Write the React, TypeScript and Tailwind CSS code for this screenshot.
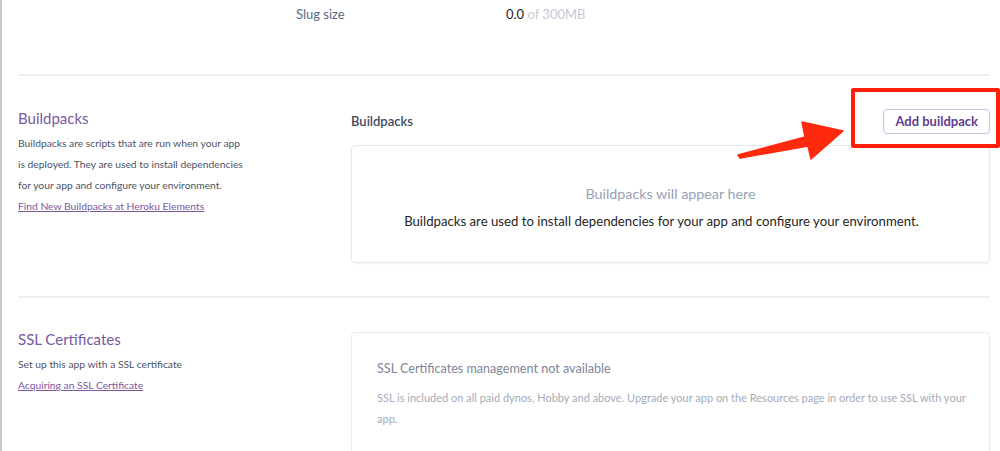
import React from 'react';

const purple = 'text-[#79589f]';

const App: React.FC = () => {
  return (
    <div className="relative w-[1000px] h-[451px] overflow-hidden bg-white border-l-2 border-[#c9c9c9] font-['Lato',sans-serif]">
      {/* slug size row */}
      <div className="h-[74px] pt-[6px]">
        <div className="flex items-center h-[18px] ml-[294px] text-[13px]">
          <span className="w-[210px] text-[#5a6a80]">Slug size</span>
          <span className="text-[#1f1f24]">0.0 <span className="text-[#c5cad6]">of 300MB</span></span>
        </div>
      </div>
      <div className="ml-[16px] w-[972px] h-[2px] bg-[#eef0f5]"></div>

      {/* buildpacks */}
      <div className="flex pl-[16px] pr-[10px] pt-[33px] pb-[33px]">
        <div className="w-[333px] shrink-0">
          <h2 className={`text-[15px] leading-[20px] -mt-[1px] ${purple}`}>Buildpacks</h2>
          <p className="mt-[5px] text-[10.3px] leading-[21px] text-[#4d5363]">
            Buildpacks are scripts that are run when your app<br />
            is deployed. They are used to install dependencies<br />
            for your app and configure your environment.
          </p>
          <a className="block text-[10.3px] leading-[21px] text-[#79589f] underline">Find New Buildpacks at Heroku Elements</a>
        </div>
        <div className="flex-1">
          <div className="flex items-center justify-between h-[25px]">
            <span className="text-[13px] font-semibold text-[#3f4a5e]">Buildpacks</span>
            <button className="h-[25px] px-[11px] rounded-[4px] border border-[#cdbfe0] text-[13px] font-bold text-[#5f3c93] bg-white">Add buildpack</button>
          </div>
          <div className="mt-[11px] h-[118px] rounded-[4px] border border-[#e6e8ee] shadow-[0_1px_2px_rgba(0,0,0,0.06)] flex flex-col items-center pt-[38px]">
            <div className="text-[14.3px] leading-[20px] text-[#96a2b6]">Buildpacks will appear here</div>
            <div className="mt-[7px] pr-[18px] text-[13.2px] leading-[20px] text-[#1f1f24]">Buildpacks are used to install dependencies for your app and configure your environment.</div>
          </div>
        </div>
      </div>
      <div className="ml-[16px] w-[972px] h-[2px] bg-[#eef0f5]"></div>

      {/* ssl */}
      <div className="flex pl-[16px] pr-[10px] pt-[34px]">
        <div className="w-[333px] shrink-0">
          <h2 className={`text-[15px] leading-[20px] -mt-[3px] ${purple}`}>SSL Certificates</h2>
          <p className="mt-[5px] text-[10.3px] leading-[21px] text-[#4d5363]">Set up this app with a SSL certificate</p>
          <a className="block text-[10.3px] leading-[21px] text-[#79589f] underline">Acquiring an SSL Certificate</a>
        </div>
        <div className="flex-1 h-[160px] rounded-[4px] border border-[#e9ebf0] pl-[25px] pt-[26px]">
          <div className="text-[12.6px] leading-[20px] text-[#7d8698]">SSL Certificates management not available</div>
          <p className="mt-[8px] text-[11px] leading-[21px] text-[#a4abb9] pr-[20px]">
            SSL is included on all paid dynos, Hobby and above. Upgrade your app on the Resources page in order to use SSL with your app.
          </p>
        </div>
      </div>

      {/* annotation overlay */}
      <div className="absolute left-[849px] top-[88px] w-[149px] h-[60px] border-[4px] border-[#ff1f0a] rounded-[2px]"></div>
      <svg className="absolute left-0 top-0 pointer-events-none" width="1000" height="451" viewBox="0 0 1000 451">
        <polygon points="736,155 803,137 800,122 841,131 809,159 806,146 738,158" fill="#ff2a0d" stroke="#ff2a0d" strokeWidth="1.5" strokeLinejoin="round" />
      </svg>
    </div>
  );
};

export default App;
